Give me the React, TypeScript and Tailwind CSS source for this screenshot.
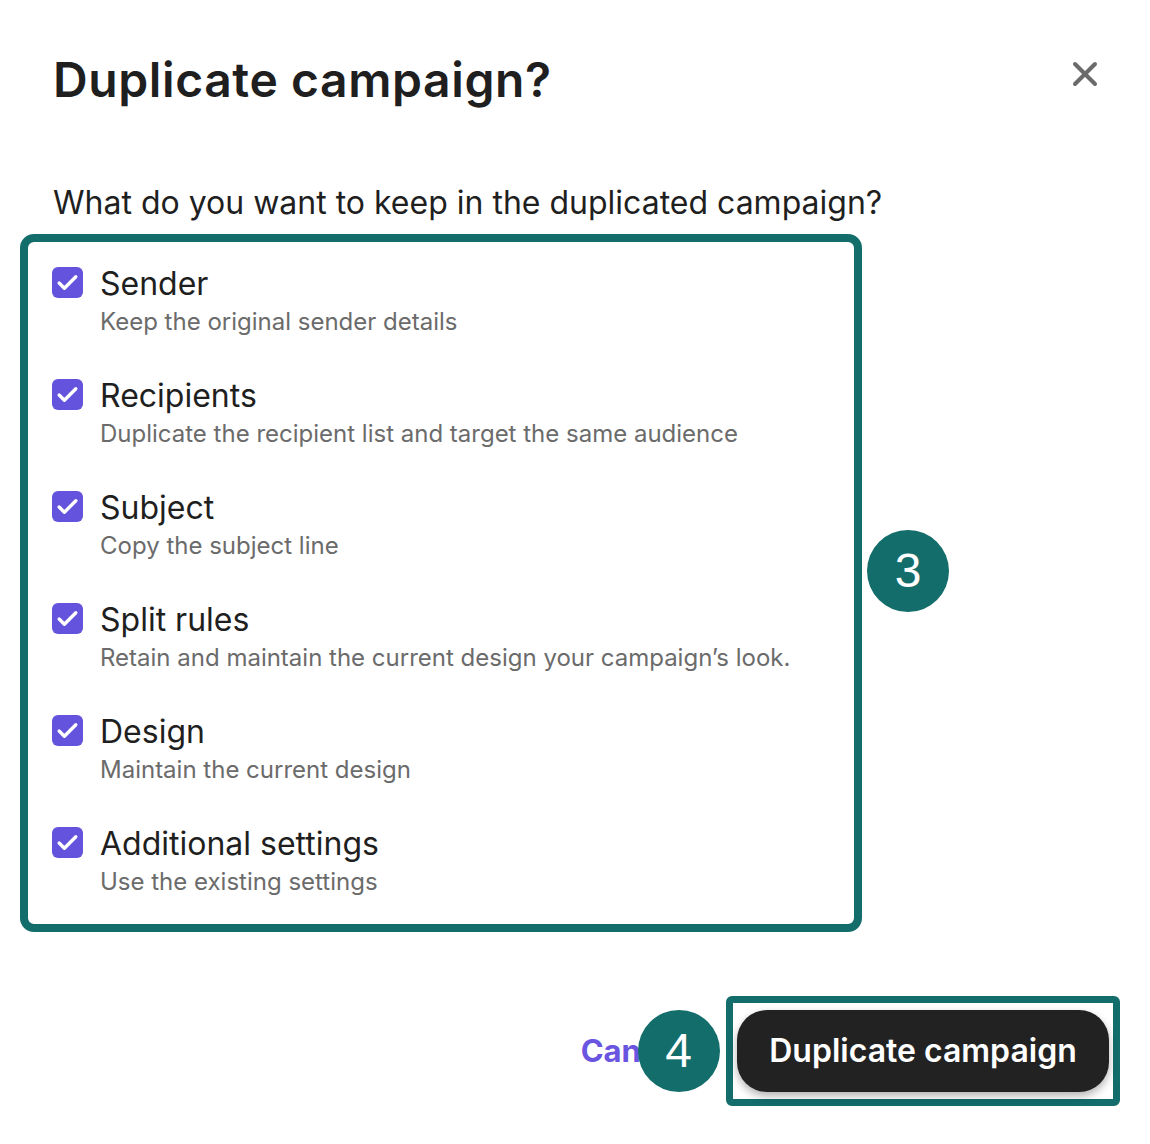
import { X } from "lucide-react";

const options = [
  { title: "Sender", description: "Keep the original sender details" },
  { title: "Recipients", description: "Duplicate the recipient list and target the same audience" },
  { title: "Subject", description: "Copy the subject line" },
  { title: "Split rules", description: "Retain and maintain the current design your campaign\u2019s look." },
  { title: "Design", description: "Maintain the current design" },
  { title: "Additional settings", description: "Use the existing settings" },
];

function Checkbox() {
  return (
    <span className="flex h-[31px] w-[31px] shrink-0 items-center justify-center rounded-[6px] bg-[#6453dc]">
      <svg viewBox="0 0 24 24" className="h-[25px] w-[25px]" fill="none" stroke="white" strokeWidth={3.2} strokeLinecap="round" strokeLinejoin="round">
        <path d="M4 12.5l5 5L20 6.5" />
      </svg>
    </span>
  );
}

function Badge({ n }: { n: number }) {
  return (
    <span className="flex h-[82px] w-[82px] shrink-0 items-center justify-center rounded-full bg-[#136d6b] font-['Liberation_Sans',sans-serif] text-[48px] leading-none text-white">
      {n}
    </span>
  );
}

export default function App() {
  return (
    <div className="min-h-screen bg-white font-['Inter',sans-serif] text-[#1f1f1f]">
      <div className="px-[53px] pr-[30px] pt-[52px]">
        <div className="flex items-start justify-between">
          <h1 className="text-[48px] font-semibold leading-[56px] tracking-[0.6px]">Duplicate campaign?</h1>
          <button className="mr-[15px] mt-[2px] text-[#6b6b6b]">
            <X className="h-[40px] w-[40px]" strokeWidth={2.4} />
          </button>
        </div>

        <p className="mt-[77px] text-[32px] leading-[36px]">What do you want to keep in the duplicated campaign?</p>

        <div className="mt-[13px] -ml-[33px] flex items-center gap-[5px]">
          <div className="w-[842px] rounded-[14px] border-[8px] border-[#136d6b] pl-[24px] pt-[25px] pb-[26px]">
            <ul className="flex flex-col gap-[41px]">
              {options.map((o) => (
                <li key={o.title} className="flex gap-[17px]">
                  <Checkbox />
                  <div className="-mt-[1px]">
                    <div className="text-[32px] leading-[36px] text-[#1f1f1f]">{o.title}</div>
                    <div className="mt-[4px] text-[24px] leading-[32px] text-[#6b6b6b]">{o.description}</div>
                  </div>
                </li>
              ))}
            </ul>
          </div>
          <div className="mb-[24px]">
            <Badge n={3} />
          </div>
        </div>

        <div className="mt-[64px] flex items-center justify-end">
          <div className="relative mr-[40px]">
            <button className="text-[31px] font-bold text-[#6a55e0]">Cancel</button>
            <div className="absolute left-[57px] top-1/2 -translate-y-1/2">
              <Badge n={4} />
            </div>
          </div>
          <div className="rounded-[6px] border-[7px] border-[#136d6b] px-[4px] py-[7px]">
            <button className="h-[82px] w-[372px] rounded-[30px] bg-[#222222] text-[32px] font-semibold text-white shadow-[0_4px_8px_rgba(0,0,0,0.3)]">
              Duplicate campaign
            </button>
          </div>
        </div>
      </div>
    </div>
  );
}
